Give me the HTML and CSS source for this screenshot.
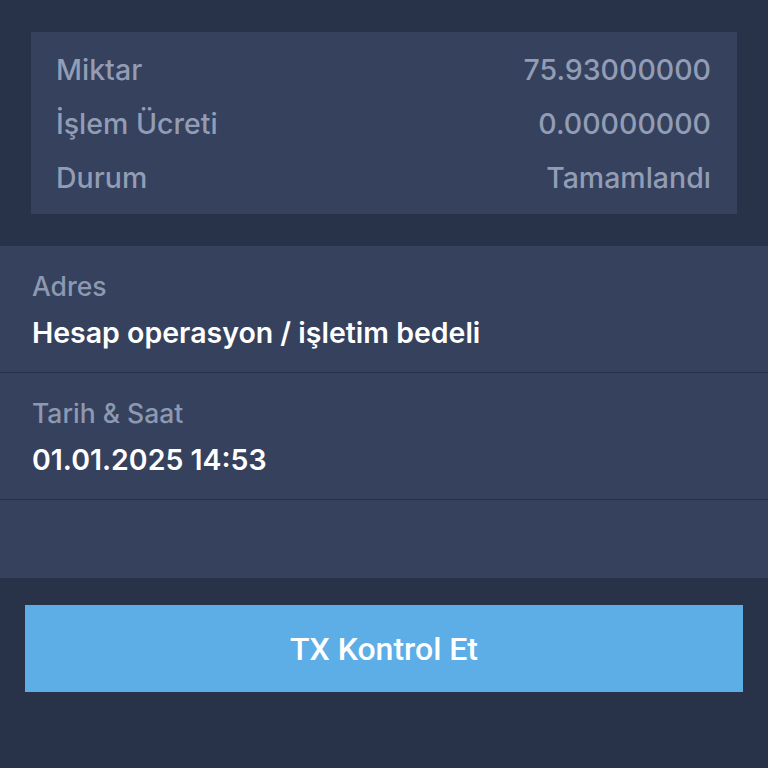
FILE: index.html
```html
<!DOCTYPE html>
<html lang="tr">
<head>
<meta charset="utf-8">
<link rel="stylesheet" href="styles.css">
</head>
<body>
<div class="page">
  <div class="top">
    <div class="card">
      <div class="row"><span>Miktar</span><span>75.93000000</span></div>
      <div class="row"><span>İşlem Ücreti</span><span>0.00000000</span></div>
      <div class="row"><span>Durum</span><span>Tamamlandı</span></div>
    </div>
  </div>
  <div class="details">
    <div class="item">
      <div class="label">Adres</div>
      <div class="value">Hesap operasyon / işletim bedeli</div>
    </div>
    <div class="item">
      <div class="label">Tarih &amp; Saat</div>
      <div class="value">01.01.2025 14:53</div>
    </div>
    <div class="spacer"></div>
  </div>
  <div class="actions">
    <button class="btn">TX Kontrol Et</button>
  </div>
</div>
</body>
</html>
```

FILE: styles.css
```css
html, body {
  margin: 0;
  padding: 0;
  background: #283249;
}
body {
  font-family: Inter, "Noto Sans", sans-serif;
  width: 768px;
  height: 768px;
  overflow: hidden;
}
.page {
  display: flex;
  flex-direction: column;
}
.top {
  padding: 32px 31px;
}
.card {
  background: #35415d;
  padding: 10px 26px 10px 25px;
  display: flex;
  flex-direction: column;
}
.row {
  display: flex;
  justify-content: space-between;
  align-items: center;
  height: 54px;
  font-size: 28.5px;
  font-weight: 500;
  color: #929db5;
}
.details {
  background: #35415d;
  display: flex;
  flex-direction: column;
}
.item {
  height: 127px;
  box-sizing: border-box;
  border-bottom: 1px solid #27304a;
  padding: 24px 32px 0 32px;
}
.label {
  font-size: 26.5px;
  font-weight: 500;
  color: #8d98b1;
  line-height: 32px;
}
.value {
  margin-top: 15px;
  font-size: 28.5px;
  font-weight: 600;
  color: #ffffff;
  line-height: 32px;
}
.spacer {
  height: 78px;
}
.actions {
  padding: 27px 25px;
}
.btn {
  display: block;
  width: 100%;
  height: 87px;
  border: none;
  background: #5dade7;
  color: #ffffff;
  font-family: Roboto, "Noto Sans", sans-serif;
  font-size: 32px;
  font-weight: 500;
}
```
